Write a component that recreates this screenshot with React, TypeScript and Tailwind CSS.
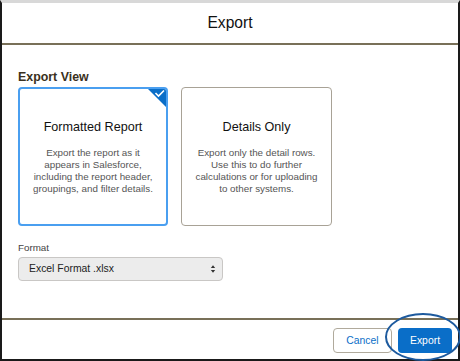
import React from "react";

export default function App() {
  return (
    <div className="w-[460px] h-[361px] bg-white relative overflow-hidden" style={{ fontFamily: '"Liberation Sans", Arial, sans-serif' }}>
      <div className="absolute inset-0 flex flex-col border-l-2 border-r-2 border-b-2 border-[#1a1a1a] border-t-[3px] border-t-[#d8d8d8]">
        {/* header */}
        <div className="h-[40px] flex items-center justify-center text-[15.6px] text-[#111]">Export</div>
        <div className="h-[2px] bg-[#787058]" />
        {/* body */}
        <div className="flex-1 pl-[16px] pt-[24px]">
          <div className="text-[12.4px] font-bold text-[#3a3020] leading-[16px] mb-[2px]">Export View</div>
          <div className="flex gap-[13px]">
            <div className="relative w-[150px] h-[139px] rounded-[4px] border-2 border-[#4a9ff0] flex flex-col items-center pt-[30px] overflow-hidden">
              <div className="absolute top-[-2px] right-[-2px] w-[22px] h-[22px]">
                <svg width="22" height="22" viewBox="0 0 22 22">
                  <path d="M0 0 H22 V22 Z" fill="#0a6ec8" />
                  <path d="M9.5 6 L12.5 9 L18 3.5" stroke="white" strokeWidth="1.6" fill="none" />
                </svg>
              </div>
              <div className="text-[12.6px] leading-[16px] text-[#111]">Formatted Report</div>
              <div className="mt-[12px] text-[9.8px] leading-[12px] text-[#555] text-center">
                Export the report as it<br />appears in Salesforce,<br />including the report header,<br />groupings, and filter details.
              </div>
            </div>
            <div className="w-[151px] h-[139px] rounded-[4px] border border-[#a8a296] flex flex-col items-center pt-[31px]">
              <div className="text-[12.6px] leading-[16px] text-[#111]">Details Only</div>
              <div className="mt-[12px] text-[9.8px] leading-[12px] text-[#555] text-center">
                Export only the detail rows.<br />Use this to do further<br />calculations or for uploading<br />to other systems.
              </div>
            </div>
          </div>
          <div className="mt-[16px] text-[9.8px] leading-[12px] text-[#444]">Format</div>
          <div className="mt-[3px] w-[205px] h-[24px] rounded-[4px] border border-[#c9c7c5] bg-[#ececec] flex items-center justify-between pl-[10px] pr-[6px]">
            <span className="text-[10.4px] text-[#222]">Excel Format .xlsx</span>
            <svg width="6" height="10" viewBox="0 0 6 10">
              <path d="M0.8 4 L3 1.2 L5.2 4 Z" fill="#333" />
              <path d="M0.8 6 L3 8.8 L5.2 6 Z" fill="#333" />
            </svg>
          </div>
        </div>
        <div className="h-[2px] bg-[#787058]" />
        {/* footer */}
        <div className="h-[39px] flex items-start justify-end gap-[6px] pr-[6px] pt-[8px]">
          <button className="w-[59px] h-[25px] rounded-[4px] border border-[#b0aa9c] bg-white text-[10.4px] text-[#0a6ec8]">Cancel</button>
          <button className="w-[54px] h-[25px] rounded-[4px] bg-[#0a6ec8] text-[10.4px] text-white">Export</button>
        </div>
      </div>
      <svg className="absolute left-[384px] top-[312px]" width="80" height="52" viewBox="0 0 80 52">
        <ellipse cx="39" cy="25" rx="37" ry="23" fill="none" stroke="#1d5a9e" strokeWidth="2" />
      </svg>
    </div>
  );
}
